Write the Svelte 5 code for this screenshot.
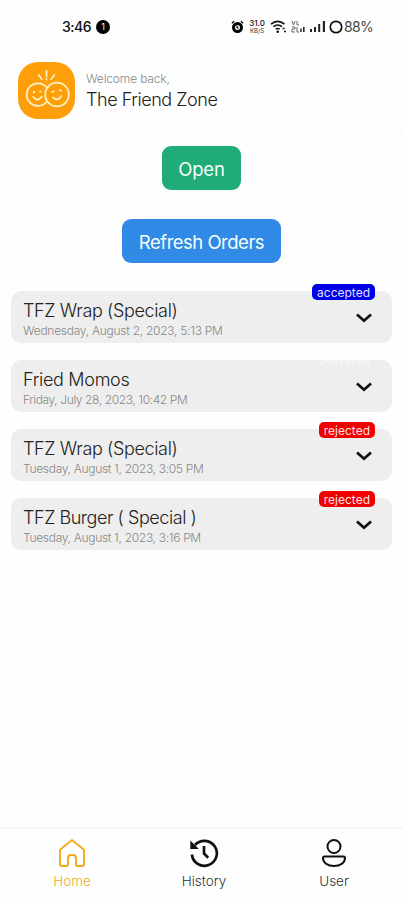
<script>
  const orders = [
    { name: 'TFZ Wrap (Special)', nameSpacing: -0.36, date: 'Wednesday, August 2, 2023, 5:13 PM', spacing: -0.27, status: 'accepted' },
    { name: 'Fried Momos', nameSpacing: -0.3, date: 'Friday, July 28, 2023, 10:42 PM', spacing: -0.39, status: 'delivered' },
    { name: 'TFZ Wrap (Special)', nameSpacing: -0.36, date: 'Tuesday, August 1, 2023, 3:05 PM', spacing: -0.31, status: 'rejected' },
    { name: 'TFZ Burger ( Special )', nameSpacing: -0.45, date: 'Tuesday, August 1, 2023, 3:16 PM', spacing: -0.31, status: 'rejected' }
  ];
</script>

<div class="screen">
  <div class="status">
    <span class="time">3:46</span>
    <span class="count">1</span>
    <div class="indicators">
      <svg width="13" height="14" viewBox="0 0 13 14"><circle cx="6.5" cy="7.5" r="4" fill="none" stroke="#000" stroke-width="3" /><path d="M.8 3.2 3.2 1.2M12.2 3.2 9.8 1.2M6 5.5v2l1.4 1" fill="none" stroke="#000" stroke-width="1.2" /></svg>
      <span class="rate"><b>31.0</b><i>KB/S</i></span>
      <svg class="wifi" width="17" height="14" viewBox="0 0 17 14"><path d="M1 4.2Q7.7-1.3 14.5 4.2M3.4 6.7q4.3-3.4 8.6 0M5.7 9.2q2-1.5 4 0" fill="none" stroke="#111" stroke-width="1.6" /><circle cx="7.7" cy="11.7" r="1.2" /><path d="M12.500 8.500h2.200M14 11.500h2" stroke="#222" stroke-width="1.600" /></svg>
      <svg class="volte" width="14" height="13" viewBox="0 0 14 13"><path d="m1 1 1.500 4L4 1M6 1v4h2M1 7h3v2H1v3h3M6 7v5h2" fill="none" stroke="#666" /><path d="M9.300 8.500h1.400V12H9.300zM12 7h1.600v5H12z" fill="#222" /></svg>
      <svg class="bars" width="17" height="13" viewBox="0 0 17 13"><path d="M1 9h2v3H1zM5 7h2v5H5zM9.200 4h2v8h-2zM13.800 1H16v11h-2.200z" fill="#222" /></svg>
      <svg class="ring" width="14" height="14" viewBox="0 0 14 14"><circle cx="7" cy="7" r="5.700" fill="none" stroke="#111" stroke-width="1.700" /></svg>
      <span class="percent">88%</span>
    </div>
  </div>

  <header>
    <svg class="logo" width="57" height="57" viewBox="0 0 57 57">
      <rect width="57" height="57" rx="20" fill="#fe9e08" />
      <g fill="none" stroke="#fff0c4" stroke-width="1.800" stroke-linecap="round">
        <path d="M28.500 25.200A11.300 11.300 0 1 0 28.500 40" />
        <circle cx="39" cy="32.500" r="11.800" />
        <path d="M28.500 9v5.500M28.500 17.200v.4M20.800 13l3 4.200M36.300 13l-3.200 4.200" />
        <path d="M15.300 35q4.300 5.300 8.300-.2M35 35.500q5 4.300 8.300-1.500M15.600 30h.8M22 29.400h.8M34 30l1.800-.6M41.700 28.300l1.400.2" />
      </g>
    </svg>
    <div class="greeting">
      <span class="welcome">Welcome back,</span>
      <span class="shop">The Friend Zone</span>
    </div>
  </header>

  <main>
    <button class="open">Open</button>
    <button class="refresh">Refresh Orders</button>
    <div class="orders">
      {#each orders as order}
        <article>
          <span class="badge {order.status}">{order.status}</span>
          <div>
            <div class="name" style="letter-spacing: {order.nameSpacing}px">{order.name}</div>
            <div class="date" style="letter-spacing: {order.spacing}px">{order.date}</div>
          </div>
          <svg width="18" height="12" viewBox="0 0 18 12"><path d="m2 2.500 7 6.300 7-6.300" fill="none" stroke="#111" stroke-width="2.700" /></svg>
        </article>
      {/each}
    </div>
  </main>

  <nav>
    <a class="active" href="#home">
      <svg width="30" height="30" viewBox="0 0 30 30"><path d="M3 11.800 15 2l12 9.800V26q0 2-2 2h-4.500q-1.500 0-1.500-1.500V20q0-3-3-3h-2q-3 0-3 3v6.500Q11 28 9.500 28H5q-2 0-2-2z" fill="none" stroke="currentColor" stroke-width="1.900" stroke-linejoin="round" /></svg>
      <span>Home</span>
    </a>
    <a class="history" href="#history">
      <svg width="30" height="30" viewBox="0 0 30 30"><path d="M6 7A12.500 12.500 0 1 1 2.900 16.500M15 8v7.500l4.200 4.200" fill="none" stroke="#111" stroke-width="2.700" /><path d="M1.300 2.500 9.800 11H1.300z" fill="#111" /></svg>
      <span>History</span>
    </a>
    <a href="#user">
      <svg width="30" height="30" viewBox="0 0 30 30"><circle cx="15" cy="8.500" r="6.500" fill="none" stroke="#111" stroke-width="2" /><path d="M5.500 18.500h19q1.500 0 1.500 1.500c0 5-5 8-11 8S4 25 4 20q0-1.500 1.500-1.500z" fill="none" stroke="#111" stroke-width="2" /></svg>
      <span>User</span>
    </a>
  </nav>
</div>

<style>
  :global(body) { background: #fff; }
  * { box-sizing: border-box; }
  .screen { width: 403px; height: 900px; display: flex; flex-direction: column; background: #fefefe; font-family: Inter, sans-serif; color: #222; overflow: hidden; }
  svg { display: block; flex: none; }
  .status { height: 53px; flex: none; display: flex; align-items: center; padding: 0 31px 0 62px; color: #111; }
  .time { width: 28px; font-size: 14px; font-weight: 500; letter-spacing: -.5px; white-space: nowrap; }
  .count { width: 14px; height: 14px; margin-left: 6px; border-radius: 50%; background: #000; color: #fff; font-size: 9px; line-height: 14px; text-align: center; }
  .indicators { margin-left: auto; display: flex; align-items: center; }
  .rate { display: flex; flex-direction: column; width: 18px; margin-left: 4px; text-align: center; line-height: 8px; font-size: 8px; }
  .rate b { font-weight: 500; }
  .rate i { font-style: normal; font-size: 6px; line-height: 7px; color: #333; }
  .wifi, .volte, .bars { margin-left: 4px; }
  .ring { margin-left: 3px; }
  .percent { font-size: 14px; letter-spacing: -.7px; margin-left: 1px; color: #444; width: 28px; }
  header { height: 78px; flex: none; display: flex; padding: 9px 18px 0; border-bottom: 1px solid #fafafa; box-shadow: 0 1px 3px #00000005; }
  .greeting { margin: 8px 0 0 11px; display: flex; flex-direction: column; align-items: flex-start; font-weight: 300; white-space: nowrap; }
  .welcome { font-size: 12px; line-height: 18px; letter-spacing: -.15px; color: #888; }
  .shop { font-size: 18px; line-height: 24px; letter-spacing: -.45px; }
  main { flex: 1; display: flex; flex-direction: column; align-items: center; padding-top: 15px; }
  button { height: 44px; border: 0; border-radius: 9px; padding: 0; color: #f4fffa; font: 400 18.500px/46px Inter, sans-serif; letter-spacing: -.5px; }
  .open { width: 79px; background: #1fac78; letter-spacing: -.2px; }
  .refresh { width: 159px; background: #318ae6; margin-top: 29px; }
  .orders { width: 381px; margin-top: 28px; display: flex; flex-direction: column; gap: 17px; }
  article { height: 52px; position: relative; display: flex; justify-content: space-between; border-radius: 10px; background: #eee; padding: 8px 19px 0 12px; white-space: nowrap; }
  article > svg { margin-top: 13px; }
  .name { font-size: 18px; line-height: 24px; font-weight: 300; }
  .date { font-size: 12px; line-height: 16px; color: #888; font-weight: 300; }
  .badge { position: absolute; right: 17px; top: -7px; height: 16px; padding: 0 5px; border-radius: 5px; font-size: 12px; line-height: 18px; color: #ffffffe6; }
  .accepted { background: #0000e8; }
  .rejected { background: #f00000; }
  .delivered { color: #ffffffa0; top: -9px; }
  nav { height: 73px; flex: none; border-top: 2px solid #f7f7f7; display: flex; justify-content: space-between; padding: 9px 36px 0 39px; }
  a { width: 66px; display: flex; flex-direction: column; align-items: center; text-decoration: none; color: #333; font-size: 13.500px; line-height: 20px; font-weight: 300; }
  a span { margin-top: 3px; }
  .history { margin-left: 2px; }
  a.active { color: #efaa19; }
</style>
